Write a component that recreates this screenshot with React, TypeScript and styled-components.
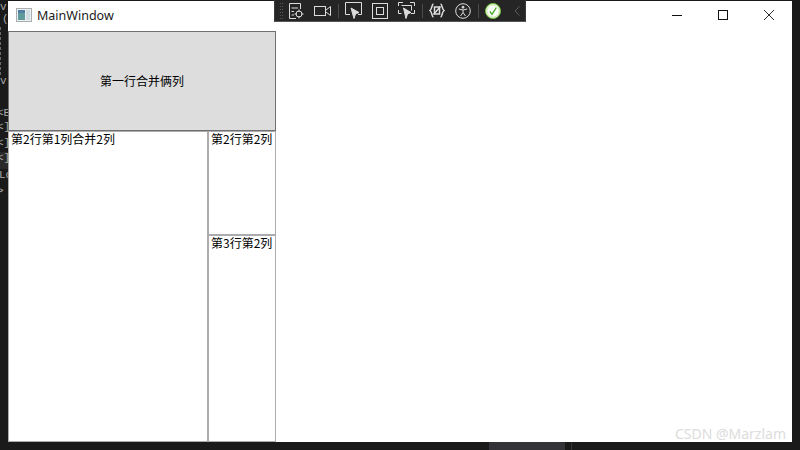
import * as React from 'react';
import styled, { createGlobalStyle } from 'styled-components';

const GlobalStyle = createGlobalStyle`
  html, body {
    margin: 0;
    padding: 0;
    background: #1a1a1a;
  }
`;

const gutterLines = [
  { height: 12, text: 'v', indent: 0 },
  { height: 14, text: '(', indent: 2 },
  { height: 48, text: '', indent: 0, dashed: true },
  { height: 26, text: 'v', indent: 0 },
  { height: 6, text: '', indent: 0 },
  { height: 14, text: '<E', indent: -3 },
  { height: 16, text: '<]', indent: -3 },
  { height: 15, text: '<]', indent: -3 },
  { height: 17, text: '<]', indent: -3, active: true },
  { height: 16, text: 'Lo', indent: -1 },
  { height: 16, text: '>', indent: -3 },
];

function GridIcon() {
  return (
    <ToolSvg width="16" height="18" viewBox="0 0 16 18">
      <path d="M8 16.5H1.5V1.5H12.5V7" />
      <path d="M3.5 6H10M3.5 9.5H6M3.5 13H6" />
      <circle cx="11" cy="12" r="3" />
      <path d="M11 7.5V10M11 14V16.5M6.5 12H9M13 12H15.5" />
    </ToolSvg>
  );
}

function CameraIcon() {
  return (
    <ToolSvg width="17" height="12" viewBox="0 0 17 12">
      <rect x="0.5" y="1.5" width="11" height="9" />
      <path d="M12 5L16.5 1.5V10.5L12 7" />
    </ToolSvg>
  );
}

function SelectIcon() {
  return (
    <ToolSvg width="17" height="18" viewBox="0 0 17 18">
      <path d="M5 12.5H0.5V0.5H16.5V12.5H13" />
      <path d="M6 6L14 10.5L10.5 12L9 16.5Z" fill="#dcdcdc" />
    </ToolSvg>
  );
}

function FrameIcon() {
  return (
    <ToolSvg width="16" height="16" viewBox="0 0 16 16">
      <rect x="0.5" y="0.5" width="15" height="15" />
      <rect x="4.5" y="4.5" width="7" height="7" />
    </ToolSvg>
  );
}

function TrackIcon() {
  return (
    <ToolSvg width="17" height="18" viewBox="0 0 17 18">
      <path d="M0.5 4V0.5H5M12 0.5H16.5V4M0.5 8V11.5H3.5M16.5 8V11.5H13" />
      <path d="M3.5 3.5H13.5V8.5" />
      <path d="M5.5 6L13 10.5L9.5 12L8 16.5Z" fill="#dcdcdc" />
    </ToolSvg>
  );
}

function BindingIcon() {
  return (
    <BoldToolSvg width="16" height="15" viewBox="0 0 16 15">
      <path d="M4.5 1C2.5 1 3.5 5.5 1 7.5C3.5 9.5 2.5 14 4.5 14" />
      <path d="M11.5 1C13.5 1 12.5 5.5 15 7.5C12.5 9.5 13.5 14 11.5 14" />
      <path d="M5.5 4H10.5V11H5.5Z" />
      <path d="M4.5 11.5L11.5 3.5" />
    </BoldToolSvg>
  );
}

function AccessIcon() {
  return (
    <ToolSvg width="16" height="16" viewBox="0 0 16 16">
      <circle cx="8" cy="8" r="7.3" />
      <circle cx="8" cy="4.2" r="1" fill="#dcdcdc" />
      <path d="M3.8 6L8 7L12.2 6M8 7V9.5M8 9.5L5.5 13M8 9.5L10.5 13" />
    </ToolSvg>
  );
}

function CheckIcon() {
  return (
    <svg width="16" height="16" viewBox="0 0 16 16">
      <circle cx="8" cy="8" r="7.5" fill="#fbfdf8" stroke="#6fbf3a" strokeWidth="1" />
      <circle cx="8" cy="8" r="6.2" fill="none" stroke="#b5df93" strokeWidth="0.8" />
      <path d="M4.8 8.5L7 11.3L11.3 4.7" fill="none" stroke="#4aa828" strokeWidth="1.3" />
    </svg>
  );
}

function ChevronIcon() {
  return (
    <svg width="6" height="10" viewBox="0 0 6 10">
      <path d="M5.5 0.5L1 5L5.5 9.5" fill="none" stroke="#5e5e5e" strokeWidth="1" />
    </svg>
  );
}

function WindowIcon() {
  return (
    <svg width="16" height="14" viewBox="0 0 16 14">
      <rect x="0.5" y="0.5" width="15" height="13" fill="#eef1f2" stroke="#a9adb0" />
      <rect x="2" y="2" width="7" height="10" fill="#5f9a9c" />
      <rect x="2" y="2" width="7" height="3" fill="#4f7fa6" />
      <rect x="10" y="2" width="4" height="10" fill="#cfdde0" />
    </svg>
  );
}

export default function App() {
  return (
    <Page>
      <GlobalStyle />
      <TopEdge />
      <Middle>
        <Gutter>
          {gutterLines.map((line, i) => (
            <GutterLine
              key={i}
              $height={line.height}
              $indent={line.indent}
              $active={line.active}
              $dashed={line.dashed}
            >
              {line.text}
            </GutterLine>
          ))}
        </Gutter>
        <Window>
          <TitleBar>
            <WindowIcon />
            <TitleText>MainWindow</TitleText>
            <CaptionButtons>
              <CaptionButton>
                <svg width="10" height="10" viewBox="0 0 10 10">
                  <path d="M0 5.5H10" stroke="#111" fill="none" />
                </svg>
              </CaptionButton>
              <CaptionButton>
                <svg width="10" height="10" viewBox="0 0 10 10">
                  <rect x="0.5" y="0.5" width="9" height="9" stroke="#111" fill="none" />
                </svg>
              </CaptionButton>
              <CaptionButton>
                <svg width="10" height="10" viewBox="0 0 10 10">
                  <path d="M0 0L10 10M10 0L0 10" stroke="#111" fill="none" strokeWidth="0.9" />
                </svg>
              </CaptionButton>
            </CaptionButtons>
          </TitleBar>
          <MainGrid>
            <MergedButton>第一行合并俩列</MergedButton>
            <TallCell>第2行第1列合并2列</TallCell>
            <Cell>第2行第2列</Cell>
            <Cell>第3行第2列</Cell>
          </MainGrid>
          <Watermark>CSDN @Marzlam</Watermark>
        </Window>
        <RightEdge />
      </Middle>
      <BottomStrip>
        <ScrollThumb />
        <ScrollLine />
      </BottomStrip>
      <DebugToolbar>
        <Grip />
        <ToolGroup>
          <GridIcon />
          <CameraIcon />
        </ToolGroup>
        <Separator />
        <ToolGroup>
          <SelectIcon />
          <FrameIcon />
          <TrackIcon />
        </ToolGroup>
        <Separator />
        <ToolGroup>
          <BindingIcon />
          <AccessIcon />
        </ToolGroup>
        <Separator />
        <CheckIcon />
        <ChevronSlot>
          <ChevronIcon />
        </ChevronSlot>
      </DebugToolbar>
    </Page>
  );
}

const Page = styled.div`
  position: relative;
  width: 800px;
  height: 450px;
  display: flex;
  flex-direction: column;
  overflow: hidden;
  background: #1a1a1a;
`;

const TopEdge = styled.div`
  height: 1px;
  flex: none;
`;

const Middle = styled.div`
  display: flex;
  height: 441px;
  flex: none;
`;

const Gutter = styled.div`
  width: 8px;
  flex: none;
  overflow: hidden;
`;

const GutterLine = styled.div<{
  $height: number;
  $indent: number;
  $active?: boolean;
  $dashed?: boolean;
}>`
  box-sizing: border-box;
  height: ${(p) => p.$height}px;
  line-height: 13px;
  white-space: pre;
  overflow: hidden;
  text-indent: ${(p) => p.$indent}px;
  font-family: 'Liberation Mono', monospace;
  font-size: 11px;
  color: #a8a8a8;
  background: ${(p) => (p.$active ? '#2a2a2a' : 'transparent')};
  border-left: ${(p) => (p.$dashed ? '1px dashed #6a6a6a' : '0')};
`;

const Window = styled.div`
  position: relative;
  width: 784px;
  flex: none;
  display: flex;
  flex-direction: column;
  background: #fff;
`;

const RightEdge = styled.div`
  flex: 1;
`;

const TitleBar = styled.div`
  box-sizing: border-box;
  height: 30px;
  flex: none;
  display: flex;
  align-items: center;
  padding: 0 0 2px 8px;
`;

const TitleText = styled.span`
  margin-left: 5px;
  font-family: 'Noto Sans', sans-serif;
  font-size: 12.5px;
  color: #1a1a1a;
`;

const CaptionButtons = styled.div`
  margin-left: auto;
  display: flex;
  height: 100%;
`;

const CaptionButton = styled.div`
  width: 46px;
  display: flex;
  align-items: center;
  justify-content: center;
`;

const MainGrid = styled.div`
  width: 268px;
  height: 411px;
  display: grid;
  grid-template-columns: 200px 68px;
  grid-template-rows: 100px 104px 207px;
  font-family: 'Noto Sans CJK SC', sans-serif;
  font-size: 12px;
  line-height: 16px;
  color: #000;
`;

const MergedButton = styled.div`
  grid-column: 1 / 3;
  display: flex;
  align-items: center;
  justify-content: center;
  box-sizing: border-box;
  background: #dddddd;
  border: 1px solid #707070;
`;

const Cell = styled.div`
  box-sizing: border-box;
  padding: 0 2px;
  line-height: 14px;
  white-space: nowrap;
  overflow: hidden;
  border: 1px solid #ababb0;
`;

const TallCell = styled(Cell)`
  grid-row: 2 / 4;
`;

const Watermark = styled.span`
  position: absolute;
  right: 6px;
  bottom: -1px;
  font-family: 'Noto Sans', sans-serif;
  font-size: 14px;
  line-height: 19px;
  color: #dcdcdc;
`;

const BottomStrip = styled.div`
  flex: 1;
  display: flex;
  padding-left: 489px;
`;

const ScrollThumb = styled.div`
  width: 76px;
  background: #333338;
`;

const ScrollLine = styled.div`
  width: 1px;
  margin-left: 6px;
  background: #333338;
`;

const DebugToolbar = styled.div`
  position: absolute;
  left: 274px;
  top: 0;
  width: 252px;
  height: 22px;
  box-sizing: border-box;
  display: flex;
  align-items: center;
  padding-left: 4px;
  background: #252526;
  border-bottom: 1px solid #55565a;
  border-left: 1px solid #3a3a3c;
  border-right: 1px solid #3a3a3c;
`;

const Grip = styled.div`
  width: 5px;
  height: 18px;
  margin-right: 4px;
  background-image: radial-gradient(#6a6a6a 0.6px, transparent 0.8px);
  background-size: 2.5px 3px;
`;

const ToolGroup = styled.div`
  display: flex;
  align-items: center;
  gap: 10px;
`;

const ToolSvg = styled.svg`
  flex: none;
  fill: none;
  stroke: #dcdcdc;
  stroke-width: 1;
`;

const BoldToolSvg = styled(ToolSvg)`
  stroke-width: 1.5;
`;

const Separator = styled.div`
  width: 1px;
  height: 14px;
  margin: 0 6px 0 7px;
  background: #4a4a4c;
`;

const ChevronSlot = styled.div`
  display: flex;
  margin-left: 13px;
`;
